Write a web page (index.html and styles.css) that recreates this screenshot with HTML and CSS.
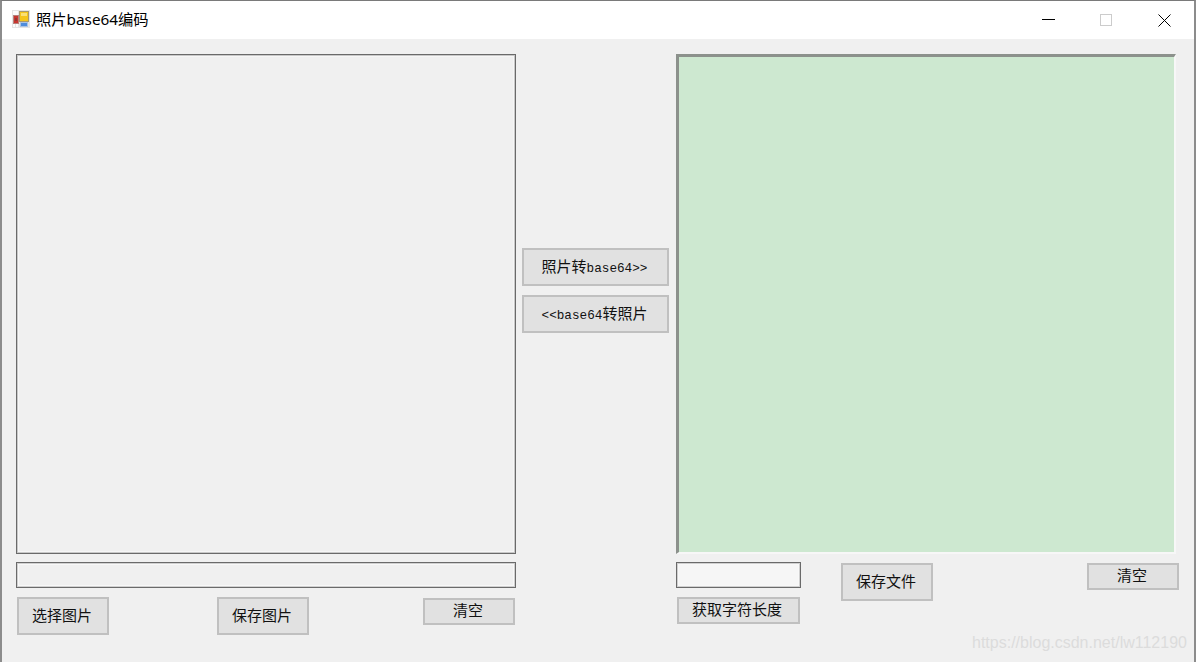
FILE: index.html
```html
<!DOCTYPE html>
<html lang="zh-CN">
<head>
  <meta charset="UTF-8">
  <meta name="viewport" content="width=device-width, initial-scale=1.0">
  <title>照片base64编码</title>
  <link rel="stylesheet" href="styles.css">
</head>
<body>
  <div class="window">
    <div class="titlebar">
      <svg class="app-icon" width="18" height="18" viewBox="0 0 18 18">
        <rect x="0" y="0" width="18" height="18" fill="#e4e4e4"/>
        <rect x="1" y="1" width="5" height="4" fill="#fbfbfb"/>
        <rect x="1" y="14" width="2" height="3" fill="#fbfbfb"/>
        <rect x="4" y="14" width="2" height="3" fill="#fbfbfb"/>
        <rect x="1" y="5" width="6" height="9" fill="#b8827c"/>
        <rect x="2" y="6" width="4" height="7" fill="#c9352f"/>
        <rect x="3" y="8" width="2" height="3" fill="#8f3a36"/>
        <rect x="7" y="1" width="10" height="11" fill="#a89a70"/>
        <rect x="8" y="2" width="8" height="9" fill="#f5c51c"/>
        <rect x="9" y="3" width="6" height="3" fill="#fbe075"/>
        <rect x="8" y="12" width="8" height="5" fill="#a9c2e4"/>
        <rect x="9" y="13" width="6" height="3" fill="#4f8ddc"/>
      </svg>
      <span class="title">照片base64编码</span>
      <div class="controls">
        <svg class="ctl" width="58" height="38" viewBox="0 0 58 38">
          <line x1="22" y1="18.5" x2="35" y2="18.5" stroke="#000"/>
        </svg>
        <svg class="ctl" width="58" height="38" viewBox="0 0 58 38">
          <rect x="22.5" y="13.5" width="11" height="11" fill="none" stroke="#ccc"/>
        </svg>
        <svg class="ctl" width="58" height="38" viewBox="0 0 58 38">
          <path d="M22.5 13.5 L34.5 25.5 M34.5 13.5 L22.5 25.5" stroke="#000" fill="none"/>
        </svg>
      </div>
    </div>

    <div class="main">
      <div class="col-left">
        <div class="picture"></div>
        <input class="field field-wide" type="text">
        <div class="row">
          <button class="btn btn-tall">选择图片</button>
          <button class="btn btn-tall save-pic">保存图片</button>
          <button class="btn btn-short push-right">清空</button>
        </div>
      </div>

      <div class="col-mid">
        <button class="btn btn-convert">照片转<span class="mono">base64&gt;&gt;</span></button>
        <button class="btn btn-convert"><span class="mono">&lt;&lt;base64</span>转照片</button>
      </div>

      <div class="col-right">
        <textarea class="output"></textarea>
        <div class="row-right">
          <div class="length-box">
            <input class="field field-short" type="text">
            <button class="btn btn-length">获取字符长度</button>
          </div>
          <button class="btn btn-tall save-file">保存文件</button>
          <button class="btn btn-short push-right">清空</button>
        </div>
      </div>
    </div>

    <div class="watermark">https://blog.csdn.net/lw112190</div>
  </div>
</body>
</html>
```

FILE: styles.css
```css
* {
  margin: 0;
  padding: 0;
  box-sizing: border-box;
}
html, body {
  height: 100%;
}
body {
  font-family: "Noto Sans", "Noto Sans CJK SC", sans-serif;
  background: #f0f0f0;
  overflow: hidden;
}
.window {
  position: relative;
  height: 662px;
  border-top: 1px solid #7a7a7a;
  border-left: 2px solid #8c8c8c;
  border-right: 2px solid #8c8c8c;
  background: #f0f0f0;
}
.titlebar {
  display: flex;
  align-items: center;
  height: 38px;
  padding-left: 10px;
  background: #fff;
}
.app-icon {
  flex: none;
  margin-bottom: 2px;
}
.title {
  margin: 0 0 4px 6px;
  font-size: 15.3px;
  color: #000;
}
.controls {
  display: flex;
  margin-left: auto;
}
.ctl {
  display: block;
}
.main {
  display: flex;
  padding: 15px 0 0 14px;
}
.col-left {
  width: 500px;
}
.picture {
  height: 500px;
  border: 1px solid #6a6a6a;
  box-shadow: inset 0 0 0 1px #c8c8c8, inset 0 0 0 2px #f6f6f6;
}
.field {
  display: block;
  height: 26px;
  border: 1px solid #6a6a6a;
  background: #f0f0f0;
  box-shadow: inset 0 0 0 1px #d0d0d0, inset 0 0 0 2px #f8f8f8;
  outline: none;
}
.field-wide {
  width: 500px;
  margin-top: 8px;
}
.field-short {
  width: 125px;
  background: #f6f6f6;
}
.row {
  display: flex;
  margin-top: 9px;
  padding: 0 1px;
}
.btn {
  display: block;
  font-family: "Noto Sans CJK SC", sans-serif;
  font-size: 15px;
  color: #111;
  background: #e1e1e1;
  border: 2px solid #c0c0c0;
  padding: 0 2px 4px 0;
}
.btn-tall {
  width: 92px;
  height: 38px;
}
.btn-short {
  width: 92px;
  height: 27px;
  margin-top: 1px;
  line-height: 20px;
}
.save-pic {
  margin-left: 108px;
}
.push-right {
  margin-left: auto;
}
.col-mid {
  display: flex;
  flex-direction: column;
  gap: 9px;
  width: 147px;
  margin-left: 6px;
  padding-top: 194px;
}
.btn-convert {
  width: 147px;
  height: 38px;
}
.mono {
  font-family: "Liberation Mono", monospace;
  font-size: 12.7px;
}
.col-right {
  width: 503px;
  margin-left: 7px;
}
.output {
  display: block;
  width: 500px;
  height: 500px;
  resize: none;
  background: #cde8d0;
  border-style: solid;
  border-width: 3px 2px 2px 3px;
  border-color: #8c918c #f7f7f7 #f7f7f7 #8c918c;
  outline: none;
}
.row-right {
  display: flex;
  align-items: flex-start;
  margin-top: 8px;
}
.length-box {
  width: 125px;
}
.btn-length {
  width: 123px;
  height: 27px;
  margin: 9px 0 0 1px;
  padding-right: 3px;
  line-height: 20px;
}
.save-file {
  margin: 1px 0 0 40px;
}
.watermark {
  position: absolute;
  left: 970px;
  top: 633px;
  font-family: "Liberation Sans", sans-serif;
  font-size: 16px;
  color: #dcdcdc;
  white-space: nowrap;
}
```
